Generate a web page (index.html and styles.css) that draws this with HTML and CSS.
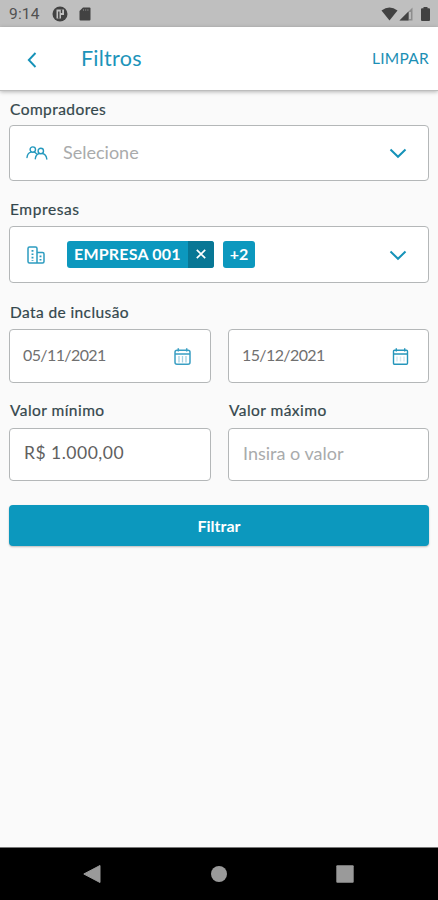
FILE: index.html
```html
<!DOCTYPE html>
<html lang="pt-BR">
<head>
<meta charset="utf-8">
<title>Filtros</title>
<link rel="stylesheet" href="styles.css">
</head>
<body>
<div class="phone">
  <div class="status">
    <span class="clock">9:14</span>
    <svg class="s-app" width="16" height="16" viewBox="0 0 16 16"><circle cx="8" cy="8" r="7.500" fill="#424242"/><path d="M4.500 3.500H12v5.500H9v3.500H4.500z" fill="#bfbfbf"/><path d="M6.800 5.500v7M9.500 3.500v3.500" stroke="#424242" stroke-width="1.400"/></svg>
    <svg class="s-card" width="12" height="14" viewBox="0 0 12 14"><path d="M4 .5h6.500a1 1 0 0 1 1 1v11a1 1 0 0 1-1 1h-9a1 1 0 0 1-1-1V4z" fill="#424242"/><path d="M4.500 2v2M6.700 2v2M8.900 2v2" stroke="#777" stroke-width=".9"/></svg>
    <span class="grow"></span>
    <svg class="s-wifi" width="17" height="14" viewBox="0 0 17 14"><path d="M.5 3.500Q8.500-2.500 16.500 3.500L8.500 13.500z" fill="#424242"/></svg>
    <svg class="s-cell" width="14" height="14" viewBox="0 0 14 14"><path d="M13.500 .5v13H.5z" fill="#8d8d8d"/><path d="M9.500 4.500v9H.5z" fill="#424242"/><path d="M11 5v7" stroke="#c9c9c9" stroke-width="1.500"/></svg>
    <svg class="s-batt" width="9" height="14" viewBox="0 0 9 14"><path d="M2.500 0h4v1.300H8a1 1 0 0 1 1 1V13a1 1 0 0 1-1 1H1a1 1 0 0 1-1-1V2.300a1 1 0 0 1 1-1h1.500z" fill="#424242"/></svg>
  </div>
  <header class="bar">
    <svg class="back" width="10" height="16" viewBox="0 0 10 16"><path d="M8.500 1 1.800 8l6.700 7" fill="none" stroke="#1592b8" stroke-width="1.900"/></svg>
    <h1 class="title">Filtros</h1>
    <button class="clear">LIMPAR</button>
  </header>
  <main class="form">
    <section class="field buyers">
      <label class="label">Compradores</label>
      <div class="box">
        <svg class="lead" width="22" height="14" viewBox="0 0 22 14" fill="none" stroke="#2398bd" stroke-width="1.400" stroke-linecap="round"><circle cx="6.800" cy="3.600" r="2.700"/><path d="M1 11.500C1.300 8.500 2.800 6.600 5 6.100M8.300 6.100c.8.300 1.500.8 2 1.500"/><circle cx="14.800" cy="5" r="2.700"/><path d="M9.300 12.800c.3-3 1.700-4.800 3.900-5.300M16.400 7.500c2.500.5 4 2.500 4.400 5.500"/></svg>
        <span class="hint select-hint">Selecione</span>
        <svg class="chev" width="18" height="11" viewBox="0 0 18 11"><path d="m1.500 1.500 7.500 7.300 7.500-7.300" fill="none" stroke="#1592b8" stroke-width="2"/></svg>
      </div>
    </section>
    <section class="field companies">
      <label class="label l-companies">Empresas</label>
      <div class="box">
        <svg class="lead" width="18" height="18" viewBox="0 0 18 18" fill="none" stroke="#2c9cc0" stroke-width="1.500"><path d="M10 17H2.500A1.500 1.500 0 0 1 1 15.500v-13A1.500 1.500 0 0 1 2.500 1h6A1.500 1.500 0 0 1 10 2.500zM10 6.500h5.500A1.500 1.500 0 0 1 17 8v7.500a1.500 1.500 0 0 1-1.500 1.500H10"/><path d="M5.500 4v11M13.500 9.500v6" stroke-width="1.900" stroke-dasharray="1.700 1.700"/></svg>
        <span class="chip"><span class="chip-text">EMPRESA 001</span><span class="chip-x"><svg width="10" height="10" viewBox="0 0 10 10"><path d="m.8.8 8.400 8.400M9.200.8.8 9.200" stroke="#fff" stroke-width="1.700"/></svg></span></span>
        <span class="more">+2</span>
        <svg class="chev" width="18" height="11" viewBox="0 0 18 11"><path d="m1.500 1.500 7.500 7.300 7.500-7.300" fill="none" stroke="#1592b8" stroke-width="2"/></svg>
      </div>
    </section>
    <section class="field dates">
      <label class="label l-date">Data de inclusão</label>
      <div class="pair">
        <div class="box"><span class="date">05/11/2021</span>
          <svg class="cal" width="17" height="17" viewBox="0 0 17 17" fill="none" stroke="#3a9fc3" stroke-width="1.500"><rect x="1" y="2.300" width="15" height="13.900" rx="2"/><path d="M1 6h15M4.300.3v3.200M12.700.3v3.200"/><path d="M5 8v6.500M8.500 8v6.500M12 8v6.500" stroke="#a3d1e2" stroke-width="1.300"/></svg></div>
        <div class="box"><span class="date">15/12/2021</span>
          <svg class="cal" width="17" height="17" viewBox="0 0 17 17" fill="none" stroke="#2596bb" stroke-width="1.400"><rect x="1.500" y="2.300" width="14" height="13.900" rx="1"/><path d="M1.500 6h14M4.300.3v3.200M12.700.3v3.200"/><path d="M5 8.500v5M8.500 8.500v5M12 8.500v5" stroke="#d3e9f1" stroke-width="1.500"/></svg></div>
      </div>
    </section>
    <section class="values">
      <div class="field"><label class="label">Valor mínimo</label><div class="box"><span class="amount">R$ 1.000,00</span></div></div>
      <div class="field"><label class="label">Valor máximo</label><div class="box"><span class="hint value-hint">Insira o valor</span></div></div>
    </section>
    <button class="submit">Filtrar</button>
  </main>
  <nav class="nav">
    <svg width="18" height="18" viewBox="0 0 18 18"><path d="M17 .5v17L.8 9z" fill="#9a9a9a" stroke="#9a9a9a" stroke-linejoin="round"/></svg>
    <svg width="18" height="18" viewBox="0 0 18 18"><circle cx="9" cy="9" r="8" fill="#9a9a9a"/></svg>
    <svg width="18" height="18" viewBox="0 0 18 18"><rect x=".3" y=".3" width="17.400" height="17.400" rx="1" fill="#9a9a9a"/></svg>
  </nav>
</div>
</body>
</html>
```
FILE: styles.css
```css
* { box-sizing: border-box; }
body { margin: 0; font-family: Lato, "Open Sans", sans-serif; background: #fafafa; }
svg { display: block; flex: none; }
button { border: 0; padding: 0; background: none; font-family: inherit; }
.phone { width: 438px; height: 900px; display: flex; flex-direction: column; overflow: hidden; }
.status { height: 27px; flex: none; display: flex; align-items: center; background: #bfbfbf; padding: 1px 8px 0 9px; }
.clock { font: 15.500px/20px Roboto, sans-serif; color: #505050; width: 43px; letter-spacing: .2px; }
.s-card { margin-left: 11px; }
.grow { flex: 1; }
.s-cell { margin-left: 1px; }
.s-batt { margin-left: 8px; }
.bar { height: 64px; flex: none; display: flex; align-items: center; background: #fff; border-bottom: 1px solid #bdbdbd; box-shadow: 0 1px 4px rgba(0, 0, 0, .28); padding: 0 9px 0 27px; position: relative; }
.back { margin-top: 2px; }
.title { margin: -2px auto 0 44px; font-size: 21.500px; line-height: 28px; font-weight: 400; color: #1c94ba; letter-spacing: .25px; }
.clear { margin-top: -2px; font-size: 15.500px; line-height: 20px; color: #1c8fb5; letter-spacing: .25px; }
.form { flex: 1; padding: 8px 9px 0; display: flex; flex-direction: column; }
.field { display: flex; flex-direction: column; }
.label { font-size: 15.500px; line-height: 20px; font-weight: 400; color: #34474c; padding-left: 1px; white-space: nowrap; letter-spacing: .45px; -webkit-text-stroke: .2px #34474c; }
.l-companies { letter-spacing: .6px; }
.l-date { letter-spacing: .4px; }
.box { background: #fff; border: 1px solid #b4b7b8; border-radius: 4px; display: flex; align-items: center; white-space: nowrap; }
.buyers .box { height: 56px; margin-top: 6px; padding: 0 21px 0 16px; }
.companies { margin-top: 18px; }
.companies .box { height: 57px; margin-top: 7px; padding: 0 21px 0 17px; }
.chev { margin: 1px 0 0 auto; }
.companies .lead { margin-top: 1px; }
.hint { color: #a9abac; font-size: 18px; line-height: 24px; }
.select-hint { margin: -3px 0 0 15px; }
.chip { display: flex; height: 27px; width: 147px; margin: -1px 0 0 22px; border-radius: 3px; overflow: hidden; background: #0c98be; color: #fff; }
.chip-text { flex: 1; padding-left: 7px; font-size: 16px; line-height: 26px; font-weight: 700; letter-spacing: .2px; }
.chip-x { width: 26px; background: #087795; display: flex; align-items: center; justify-content: center; }
.more { width: 32px; height: 27px; margin: -1px 0 0 9px; border-radius: 3px; background: #0c98be; color: #fff; font-size: 16px; line-height: 25px; font-weight: 700; text-align: center; }
.dates { margin-top: 19px; }
.pair, .values { display: grid; grid-template-columns: 202px 201px; column-gap: 17px; }
.pair { margin-top: 7px; }
.pair .box { height: 54px; padding: 0 19px 0 13px; justify-content: space-between; }
.date { font-size: 16px; line-height: 22px; color: #707070; margin-top: -3px; letter-spacing: -.6px; }
.values { margin-top: 17px; }
.values .box { height: 53px; margin-top: 8px; padding: 0 14px; }
.amount { font-size: 17.500px; line-height: 24px; color: #606060; margin-top: -3px; letter-spacing: .5px; }
.value-hint { margin-top: -4px; }
.submit { height: 41px; margin-top: 24px; border-radius: 4px; background: #0c98be; color: #fff; font-size: 16px; line-height: 20px; font-weight: 700; box-shadow: 0 1px 2px rgba(0, 0, 0, .25); }
.nav { height: 53px; flex: none; background: #000; border-top: 1px solid #777; display: flex; justify-content: space-between; padding: 17px 84px 0 83px; }
```
